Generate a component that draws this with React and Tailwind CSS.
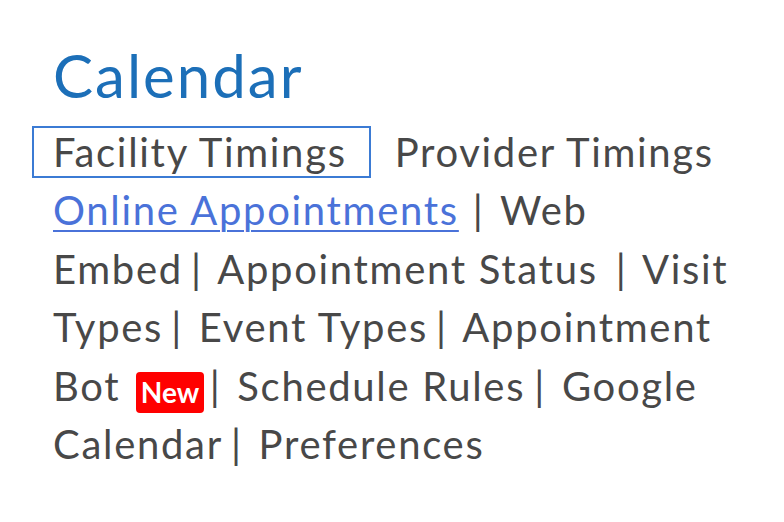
import React from 'react'

const Sep = ({ className = 'ml-[8px]' }) => <span className={`${className} mr-[4px]`}>|</span>

export default function App() {
  return (
    <div className="min-h-[522px] bg-white pl-[53px] pr-[48px] pt-[39px] font-['Lato',sans-serif] tracking-[1.7px] text-[#484848]">
      <h1 className="mb-[12px] text-[60px] leading-[72px] tracking-[2px] text-[#1c6fb8]">Calendar</h1>
      <div className="text-[40px] leading-[58.4px]">
        <a className="-ml-[21px] border-2 border-[#3b7bd4] pl-[19px] pr-[22px]">Facility Timings</a>{' '}
        <a className="ml-[12px]">Provider Timings</a>{' '}
        <a className="text-[#4a72d9] underline decoration-2 underline-offset-[5px]">Online Appointments</a>{' '}
        <Sep className="ml-[2px]" />{' '}
        Web Embed<Sep />{' '}
        Appointment Status{' '}<Sep className="ml-[6px]" />{' '}
        Visit Types<Sep />{' '}
        Event Types<Sep />{' '}
        Appointment Bot{' '}
        <span className="ml-[4px] inline-block rounded-[4px] bg-[#ff0000] px-[4.5px] align-[-2px] text-[28px] font-bold leading-[41px] tracking-normal text-white">New</span>
        <Sep className="ml-[6px]" />{' '}
        Schedule Rules<Sep className="ml-[9px]" />{' '}
        Google Calendar<Sep />{' '}
        Preferences
      </div>
    </div>
  )
}
